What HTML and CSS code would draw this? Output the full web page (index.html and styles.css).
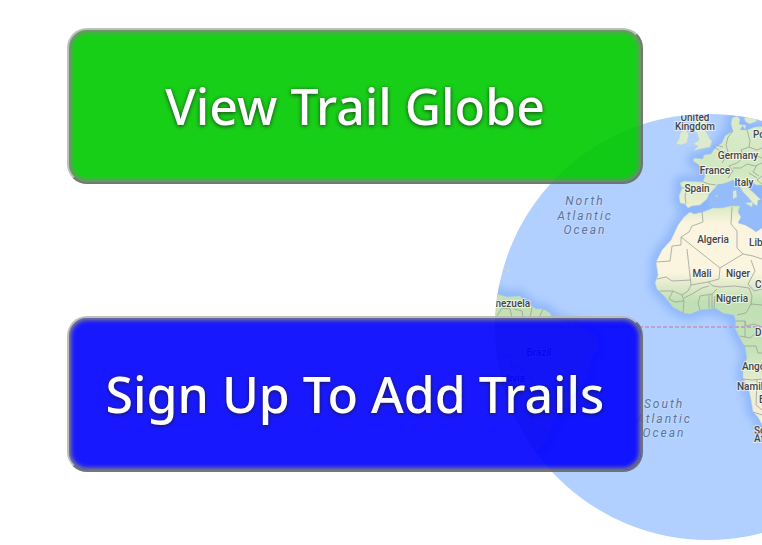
FILE: index.html
```
<!DOCTYPE html>
<html lang="en">
<head>
<meta charset="utf-8">
<meta name="viewport" content="width=device-width, initial-scale=1">
<title>Trail Globe</title>
<link rel="stylesheet" href="styles.css">
</head>
<body>
<main class="hero">
  <svg class="globe" viewBox="495 114 426 426" aria-hidden="true">
    <defs>
      <clipPath id="disc"><circle cx="708" cy="327" r="213"/></clipPath>
      <filter id="soft" x="-10%" y="-10%" width="120%" height="120%"><feGaussianBlur stdDeviation="5"/></filter>
      <linearGradient id="africa" x1="0" y1="205" x2="0" y2="430" gradientUnits="userSpaceOnUse">
        <stop offset="0" stop-color="#d5e8c0"/>
        <stop offset=".08" stop-color="#fbf5df"/>
        <stop offset=".3" stop-color="#fbf5df"/>
        <stop offset=".36" stop-color="#dfe9c9"/>
        <stop offset=".43" stop-color="#bfe0b4"/>
        <stop offset=".65" stop-color="#c6e2b8"/>
        <stop offset=".8" stop-color="#e9edd2"/>
        <stop offset="1" stop-color="#f6f0dc"/>
      </linearGradient>
      <linearGradient id="europe" x1="0" y1="114" x2="0" y2="210" gradientUnits="userSpaceOnUse">
        <stop offset="0" stop-color="#dcebcb"/>
        <stop offset=".6" stop-color="#d0e8c0"/>
        <stop offset="1" stop-color="#f0f0d5"/>
      </linearGradient>
      <path id="eu" d="M733 131L731 124 732 118 737 116 740 119 739 124 743 125 740 130 747 130 755 127 770 126V192L762 185 756 185 751 181 747 183 748 188 754 193 761 200 758 200 757 206 753 203 748 197 743 192 738 184 733 180 728 182 722 184 718 184 715 188 709 194 707 199 700 205 692 206 688 208 685 204 680 203 679 196 682 188 680 183 684 181 703 182 705 176 704 169 699 165 693 161 694 158 703 159 704 155 711 154 716 147 722 143 725 136Z"/>
      <path id="af" d="M678 225L684 217 690 212 694 214 703 212 713 208 722 208 731 206 740 206 738 212 741 217 738 223 745 225 752 229 756 232 762 228 780 226V440L762 425 758 417 753 412 751 400 749 390 743 378 743 370 747 358 745 347 740 338 735 328 736 321 734 315 723 313 715 308 700 310 690 314 684 313 673 307 665 297 657 289 655 283 658 275 656 262 662 250 671 240Z"/>
      <path id="sa" d="M480 290L497 293 500 295 507 297 520 296 523 300 530 305 536 309 543 309 550 313 552 318 565 322 580 326 596 336 599 346 590 360 588 377 575 391 568 405 555 420 550 435 540 448 520 460H480Z"/>
    </defs>
    <g clip-path="url(#disc)">
      <rect x="495" y="114" width="426" height="426" fill="#b1d0ff"/>
      <g fill="none" stroke="#8bb4fa" stroke-width="11" filter="url(#soft)">
        <use href="#eu"/><use href="#af"/><use href="#sa"/>
      </g>
      <path fill="#94bcfb" d="M709 198L718 184 732 181 745 194 762 204V230L742 222 740 206 709 207Z"/>
      <g stroke="#b4d0cc" stroke-width=".5">
        <use href="#eu" fill="url(#europe)"/>
        <use href="#af" fill="url(#africa)"/>
        <use href="#sa" fill="#c3e1b5"/>
        <path fill="#dcebcf" d="M680 133L685 130 689 134 687 143 681 145 676 144 679 139ZM696 121L703 119 707 122 703 128 707 133 710 139 712 141 710 147 700 149 693 151 698 146 693 144 699 140 697 133 692 129ZM733 191L736 190 737 197 733 199ZM745 203L753 202 752 207ZM744 118L753 116 757 121 750 124 746 122ZM742 125L746 125 745 129Z"/>
      </g>
      <path fill="#c9e3b5" d="M506 270h3l-1 2zM715 196l3-1-1 2z"/>
      <g fill="none" stroke="#9ca197" stroke-width=".8" stroke-linejoin="round">
        <path d="M682 188L687 188 685 196 686 204M703 182L709 184 716 185M713 146L720 151 725 152 725 158 722 163M716 145L723 147M733 131L728 137 726 145 728 152M747 130L750 141 749 147 741 150 744 157 737 163 729 166M729 166L733 171 728 178M733 168L741 168 747 164 755 166 762 163M749 147L757 150 762 148M750 153L762 158M757 165L753 172 759 176M749 173L757 178M762 176L757 180 762 184"/>
        <path d="M702 212L703 222 692 226 689 232 681 237 681 245 672 246 670 261 656 262M681 237L720 268 743 254 737 248 737 231 731 224 732 207M743 254L753 256 762 259M720 268L719 279 708 282 691 285 687 249M657 279L666 277 672 281 691 280M691 285L688 291 682 295 673 291 660 291M708 282L713 286 720 287 735 286 749 288M749 288L752 296 751 305M751 260L755 271 748 284 754 291 762 289M682 295L684 301 683 313M673 291L669 299 675 302 684 301M692 294L702 288 709 286M692 294L684 298M700 296L698 303 700 310M700 296L712 294 717 289M709 295V308M712 294V308M715 296L714 308M737 315L746 313 751 304 762 305M736 321L745 321 746 326 754 324 762 327M745 321V337M740 336L750 338 757 332 762 335M744 346H756L758 353H762M743 379L752 380 762 379M757 380L756 405 762 410M753 412L762 415"/>
        <path d="M497 316L502 308 510 309 512 318M514 309L522 311 523 318M532 307L530 318M543 309L539 318M495 360L510 355 512 365 526 370 535 384 532 398 542 403 533 410 531 423 549 433 555 420"/>
      </g>
      <path d="M495 327H770" fill="none" stroke="#bfa3c6" stroke-width="2" stroke-dasharray="4 2"/>
      <g class="place">
        <text x="695" y="121">United</text><text x="695" y="130">Kingdom</text>
        <text x="738" y="159">Germany</text><text x="715" y="174">France</text>
        <text x="744" y="186">Italy</text><text x="697" y="192">Spain</text>
        <text x="713" y="243">Algeria</text><text x="702" y="277">Mali</text>
        <text x="738" y="277">Niger</text><text x="732" y="302">Nigeria</text>
        <text x="507" y="307">Venezuela</text><text x="539" y="356">Brazil</text>
        <text x="510" y="382">Bolivia</text>
      </g>
      <g class="place place-east">
        <text x="753" y="138">Poland</text><text x="749" y="246">Libya</text>
        <text x="755" y="288">Chad</text><text x="755" y="336">DR Congo</text>
        <text x="742" y="370">Angola</text><text x="737" y="390">Namibia</text>
        <text x="759" y="403">Botswana</text>
        <text x="754" y="434">South</text><text x="754" y="442">Africa</text>
      </g>
      <g class="ocean">
        <text x="585" y="205">North</text><text x="585" y="220">Atlantic</text><text x="585" y="234">Ocean</text>
        <text x="664" y="408">South</text><text x="664" y="423">Atlantic</text><text x="664" y="437">Ocean</text>
      </g>
    </g>
  </svg>
  <nav class="actions" aria-label="Trails">
    <button class="action action-view" type="button">View Trail Globe</button>
    <button class="action action-join" type="button">Sign Up To Add Trails</button>
  </nav>
</main>
</body>
</html>
```
FILE: styles.css
```
* {
  box-sizing: border-box;
}

body {
  margin: 0;
  background: #fff;
  font-family: "Noto Sans", "Open Sans", sans-serif;
}

.hero {
  position: relative;
  min-height: 100vh;
  overflow: hidden;
}

.globe {
  position: absolute;
  top: 114px;
  left: 65%;
  width: 426px;
  height: 426px;
}

.place {
  fill: #444;
  stroke: rgba(255, 255, 255, 0.6);
  stroke-width: 2px;
  paint-order: stroke;
  font: 500 10px Roboto, sans-serif;
  text-anchor: middle;
}

.place-east {
  text-anchor: start;
}

.ocean {
  fill: #5c7499;
  stroke: rgba(205, 224, 255, 0.5);
  stroke-width: 2px;
  paint-order: stroke;
  font: italic 400 12px Roboto, sans-serif;
  letter-spacing: 2px;
  text-anchor: middle;
}

.actions {
  position: relative;
  display: grid;
  gap: 132px;
  padding: 28px 119px 72px 67px;
}

.action {
  padding: 40px 24px;
  border: 2px solid;
  border-color: #b8b8b8 #686868 #686868 #b8b8b8;
  border-radius: 20px;
  box-shadow: inset 0 0 4px 2px #777;
  color: #fff;
  font: 500 50px/72px "Noto Sans", "Open Sans", sans-serif;
  text-shadow: 0 1px 4px rgba(0, 0, 0, 0.8);
  opacity: 0.9;
  cursor: pointer;
}

.action-view {
  background: #00ca00;
}

.action-join {
  background: #00f;
}
```
